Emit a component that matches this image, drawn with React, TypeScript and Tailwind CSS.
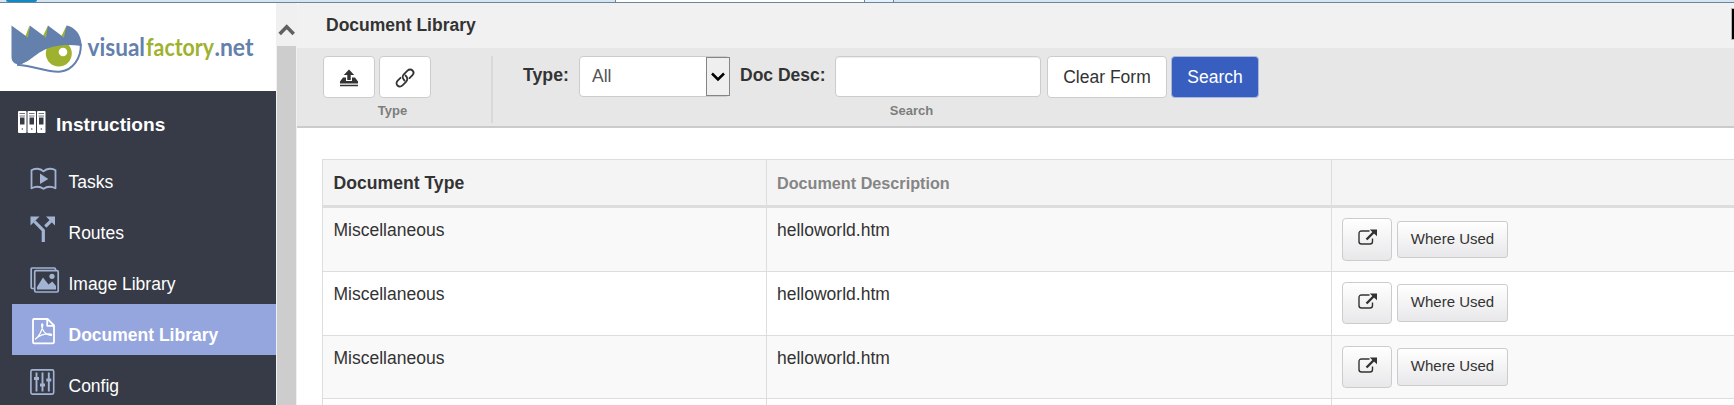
import React from "react";

const rows = [
  { type: "Miscellaneous", desc: "helloworld.htm", height: "h-[64px]", open: "mt-[10px] h-[43px]", used: "mt-[13px] h-[37px]" },
  { type: "Miscellaneous", desc: "helloworld.htm", height: "h-[64px]", open: "mt-[10px] h-[42px]", used: "mt-[12px] h-[38px]" },
  { type: "Miscellaneous", desc: "helloworld.htm", height: "h-[63px]", open: "mt-[10px] h-[42px]", used: "mt-[12px] h-[38px]" },
];

function BindersIcon() {
  return (
    <svg className="h-[23px] w-[28px] shrink-0" viewBox="0 0 28 23" fill="none">
      {[0, 9.5, 19].map((x) => (
        <g key={x}>
          <rect x={x} y="0" width="8.5" height="22" rx="1" fill="#fff" />
          <path d={`M${x + 1.5} 2.5h5.5M${x + 1.5} 5h5.5`} stroke="#707580" strokeWidth="1" />
          <rect x={x + 2} y="6.5" width="4.5" height="7" fill="#363b47" />
          <circle cx={x + 4.3} cy="18" r="0.7" fill="#363b47" />
        </g>
      ))}
    </svg>
  );
}

function TasksIcon() {
  return (
    <svg className="h-[28px] w-[30px]" viewBox="0 0 30 28" fill="none">
      <path d="M1.500 5.200C4.500 3.200 10 3 13.500 6.300C17 3 22.500 3.200 25.500 5.200V23.300C21.500 21.300 17 21.300 13.500 23.800C10 21.300 5.500 21.300 1.500 23.300Z" stroke="#a3b4d3" strokeWidth="1.8" strokeLinejoin="round" />
      <path d="M10 8.500L18.300 14L10 19Z" fill="#a3b4d3" />
    </svg>
  );
}

function RoutesIcon() {
  return (
    <svg className="h-[28px] w-[30px]" viewBox="0 0 30 28" fill="none">
      <path d="M13.300 26V14.500L4.500 5.500M15.300 10.500L21 4.800" stroke="#a3b4d3" strokeWidth="3.200" />
      <path d="M0.500 0.500H9.500L0.500 9.500ZM16 0.500H25V9.500Z" fill="#a3b4d3" />
    </svg>
  );
}

function ImagesIcon() {
  return (
    <svg className="h-[28px] w-[30px]" viewBox="0 0 30 28" fill="none" stroke="#a3b4d3" strokeWidth="1.700">
      <path d="M4 21.500H2.500Q1.200 21.500 1.200 20V2Q1.200 1 2.500 1H24.500Q25.500 1 25.500 3" />
      <rect x="4.700" y="3.700" width="23.500" height="21.300" rx="1.200" />
      <path d="M7 22.500V20L13 10.500L18.500 17.500L22.300 14.500L26 19V22.500Z" fill="#a3b4d3" stroke="none" />
      <circle cx="22" cy="9.300" r="2.600" fill="#a3b4d3" stroke="none" />
    </svg>
  );
}

function PdfIcon() {
  return (
    <svg className="h-[28px] w-[30px]" viewBox="0 0 30 28" fill="none" stroke="#fff" strokeWidth="1.800" strokeLinejoin="round">
      <path d="M4 1H17.500L24 7.500V24Q24 25.300 22.500 25.300H4.200Q3 25.300 3 24V2.200Q3 1 4 1Z" />
      <path d="M17.200 1V7.800H24" />
      <path d="M5.500 21C9 18.500 12.500 12 12.800 7C12.800 5.500 11.400 5.500 11.600 7.500C12 11.500 14.500 16 20.500 17.300C22.200 17.600 22 16 20 15.900C15 15.800 9.500 17 5.500 21Z" strokeWidth="1.300" />
    </svg>
  );
}

function ConfigIcon() {
  return (
    <svg className="h-[28px] w-[30px]" viewBox="0 0 30 28" fill="none" stroke="#a3b4d3">
      <rect x="0.900" y="0.900" width="22.800" height="24.200" rx="1.500" strokeWidth="1.600" />
      <path d="M6.500 3.500V22.500M12.500 3.500V22.500M18.800 3.500V22.500" strokeWidth="1.900" />
      <path d="M4 9.500H9M10 16H15M16.300 11H21.300" strokeWidth="3.200" />
    </svg>
  );
}

function OpenIcon() {
  return (
    <svg className="h-[17px] w-[20px]" viewBox="0 0 20 17" fill="none">
      <path d="M11.500 2H3.500Q1 2 1 4.500V12.500Q1 15 3.500 15H12Q14.500 15 14.500 12.500V9.500" stroke="#333" strokeWidth="1.400" />
      <path d="M8.500 10.500L16 3" stroke="#333" strokeWidth="2.400" />
      <path d="M11.700 0.500H19V7.300Z" fill="#333" />
    </svg>
  );
}

function Logo() {
  return (
    <svg className="h-[52px] w-[248px] font-[Lato,sans-serif] text-[25px] font-bold" viewBox="10 24 248 52" fill="none">
      <path d="M25.500 36L29.500 25.500V39ZM43 36L48 25.500V39ZM61.500 36L66.500 25.500V39Z" fill="#9eb22f" />
      <path d="M11.500 25.500L28 37.500L29.800 25.500L46 37.500L48 25.500L64 37.500L66.500 25.500C75 27 81.500 35 81.500 45C68 42 51 45 42 51C34 56 29 61 22 64C15.500 65.500 11.500 62 11.500 57Z" fill="#6480ad" />
      <path d="M23 63.500C34 61 42 48 57 45.300C66 43.600 75 44.200 81 46C81.500 58 73 70 62 71.500C50 73 37 66 23 65Z" fill="#fff" />
      <circle cx="58.800" cy="53.500" r="13" fill="#9eb22f" />
      <path d="M40 50C44 45 47 40 58 39C68 39 76 40 81.500 43.500V46C66 43.500 51 45.300 40 52Z" fill="#6480ad" />
      <circle cx="63" cy="52" r="4.300" fill="#fff" />
      <path d="M80.800 44C81.500 59 72 70 61 71.500C48 73 36 66 17 64.800" stroke="#6480ad" strokeWidth="2" />
      <text x="87.500" y="56" textLength="57.500" lengthAdjust="spacingAndGlyphs" fill="#6480ad">visual</text>
      <text x="146" y="56" textLength="68" lengthAdjust="spacingAndGlyphs" fill="#9eb22f">factory</text>
      <text x="214.500" y="56" textLength="39" lengthAdjust="spacingAndGlyphs" fill="#6480ad">.net</text>
    </svg>
  );
}

const navItems = [
  { label: "Tasks", icon: <TasksIcon />, active: false },
  { label: "Routes", icon: <RoutesIcon />, active: false },
  { label: "Image Library", icon: <ImagesIcon />, active: false },
  { label: "Document Library", icon: <PdfIcon />, active: true },
  { label: "Config", icon: <ConfigIcon />, active: false },
];

function BrowserStrip() {
  return (
    <div className="flex h-[3px] shrink-0 border-b border-[#6d849c] bg-[#d6e5f2]">
      <div className="ml-[6px] h-[2px] w-[31px] rounded-b-sm bg-[#118ac4]" />
      <div className="ml-[578px] w-[250px] border-x border-[#6d849c] bg-white" />
      <div className="w-[29px] border-r border-[#6d849c] bg-[#e4f0fb]" />
    </div>
  );
}

function Sidebar() {
  return (
    <aside className="w-[276px] shrink-0 bg-[#363b47] text-white">
      <div className="h-[88px] bg-white pl-[10px] pt-[21px]">
        <Logo />
      </div>
      <div className="flex h-[60px] pl-[18px] pt-[20px]">
        <BindersIcon />
        <span className="ml-[10px] mt-[3px] text-[19.100px] font-bold leading-[22px]">Instructions</span>
      </div>
      <nav className="pl-[12px]">
        {navItems.map((item) => (
          <div key={item.label} className={item.active ? "flex h-[51px] bg-[#95a6df] pl-[18px] pt-[14px] font-bold" : "flex h-[51px] pl-[18px] pt-[14px]"}>
            {item.icon}
            <span className="ml-[8.500px] mt-[7px] whitespace-nowrap leading-[20px]">{item.label}</span>
          </div>
        ))}
      </nav>
    </aside>
  );
}

function Scrollbar() {
  return (
    <div className="flex w-[21px] shrink-0 flex-col bg-[#f0f0f0] pl-px pr-px">
      <svg className="h-[43px] w-[19px]" viewBox="0 0 19 43" fill="none">
        <path d="M2.700 31L9.700 23.700L16.700 31" stroke="#606060" strokeWidth="3.500" />
      </svg>
      <div className="flex-1 bg-[#cdcdcd]" />
    </div>
  );
}

function Toolbar() {
  return (
    <div className="flex h-[80px] shrink-0 border-b-2 border-[#cbcbcb] bg-[#e7e7e7] pl-[26px] pt-[8px]">
      <div className="mb-[3px] flex w-[170px] flex-col border-r-2 border-[#d9d9d9]">
        <div className="flex gap-[4px]">
          <button className="flex h-[42px] w-[52px] items-center justify-center rounded-[4px] border border-[#ccc] bg-white">
            <svg className="mt-[2px] h-[18px] w-[20px]" viewBox="0 0 20 18" fill="#333">
              <path d="M10 0.500L15.200 6H11.700V11H8.300V6H4.800ZM4 8.500H7V12H13V8.500H16L19 12.500V14.400H1V12.500ZM1 15.700H19V17.200H1Z" />
            </svg>
          </button>
          <button className="flex h-[42px] w-[52px] items-center justify-center rounded-[4px] border border-[#ccc] bg-white">
            <svg className="mt-[2px] h-[20px] w-[20px]" viewBox="0 0 20 20" fill="none" stroke="#333" strokeWidth="1.800" strokeLinecap="round">
              <path d="M9.500 12.500C7 10 7.200 8 9 6.200L12.500 2.700C14.200 1 16.200 1.200 17.500 2.500C18.800 3.800 18.900 5.800 17.300 7.400L14.500 10.200" />
              <path d="M10.500 7.500C13 10 12.800 12 11 13.800L7.500 17.300C5.800 19 3.800 18.800 2.500 17.500C1.200 16.200 1.100 14.200 2.700 12.600L5.500 9.800" />
            </svg>
          </button>
        </div>
        <span className="mr-[29px] mt-[5px] text-center text-[13px] font-bold leading-[16px] text-[#7d7d7d]">Type</span>
      </div>
      <div className="ml-[30px] flex w-[777px] flex-col">
        <div className="flex h-[42px] items-start whitespace-nowrap">
          <label className="mt-[9px] w-[56px] text-[17.700px] font-bold leading-[20px]">Type:</label>
          <div className="flex h-[41px] w-[151px] justify-between rounded-[4px] border border-[#ccc] bg-white">
            <span className="ml-[12px] mt-[9px] leading-[20px] text-[#555]">All</span>
            <div className="-mr-px flex w-[24px] items-center justify-center border border-[#858585] bg-[#efefef]">
              <svg className="h-[10px] w-[16px] shrink-0" viewBox="0 0 16 10" fill="none">
                <path d="M2 1.500L8 7.500L14 1.500" stroke="#000" strokeWidth="2.500" />
              </svg>
            </div>
          </div>
          <label className="ml-[10px] mt-[9px] w-[95px] font-bold leading-[20px]">Doc Desc:</label>
          <input className="h-[41px] w-[206px] rounded-[4px] border border-[#ccc] bg-white shadow-[inset_0_1px_1px_rgba(0,0,0,0.075)]" />
          <button className="ml-[6px] h-[42px] w-[120px] rounded-[4px] border border-[#ccc] bg-white">Clear Form</button>
          <button className="ml-[4px] h-[42px] w-[88px] rounded-[4px] border border-[#a9b8de] bg-[#385fc0] text-white">Search</button>
        </div>
        <span className="mt-[5px] text-center text-[13px] font-bold leading-[16px] text-[#7d7d7d]">Search</span>
      </div>
    </div>
  );
}

function DocumentTable() {
  return (
    <div className="ml-[25px] mt-[31px] border-l border-t border-[#ddd]">
      <div className="flex h-[48px] border-b-[3px] border-[#ddd] bg-[#f4f4f4] font-bold">
        <div className="w-[444px] border-r border-[#ddd] pl-[10.500px] pt-[13px] text-[17.600px] leading-[20px]">Document Type</div>
        <div className="w-[565px] border-r border-[#ddd] pl-[10px] pt-[13px] text-[16.200px] leading-[20px] text-[#858585]">Document Description</div>
      </div>
      {rows.map((row, i) => (
        <div key={i} className={`flex border-b border-[#ddd] odd:bg-white even:bg-[#f9f9f9] ${row.height}`}>
          <div className="w-[444px] border-r border-[#ddd] pl-[10.500px] pt-[12px] leading-[20px]">{row.type}</div>
          <div className="w-[565px] border-r border-[#ddd] pl-[10px] pt-[12px] leading-[20px]">{row.desc}</div>
          <div className="flex items-start pl-[10px]">
            <button className={`flex w-[50px] items-center justify-center rounded-[4px] border border-[#ccc] bg-linear-to-b from-white to-[#e8e8ea] pb-[4px] pl-[2px] ${row.open}`}>
              <OpenIcon />
            </button>
            <button className={`ml-[5px] w-[111px] rounded-[3px] border border-[#ccc] bg-linear-to-b from-white to-[#e8e8ea] pb-[2px] text-[15px] leading-[18px] ${row.used}`}>Where Used</button>
          </div>
        </div>
      ))}
      <div className="flex h-[8px]">
        <div className="w-[444px] border-r border-[#ddd]" />
        <div className="w-[565px] border-r border-[#ddd]" />
      </div>
    </div>
  );
}

export default function App() {
  return (
    <div className="flex h-[405px] w-[1734px] flex-col overflow-hidden bg-white font-['Liberation_Sans',Arial,sans-serif] text-[17.500px] text-[#333]">
      <BrowserStrip />
      <div className="flex min-h-0 flex-1">
        <Sidebar />
        <Scrollbar />
        <main className="flex min-w-0 flex-1 flex-col">
          <header className="flex h-[45px] shrink-0 justify-between rounded-tl-[3px] bg-[#f1f1f1] pl-[29px]">
            <h1 className="mt-[12px] font-bold leading-[20px]">Document Library</h1>
            <div className="mt-[5px] h-[32px] w-[3px] border-y border-l border-[#b5b5b5] bg-black" />
          </header>
          <Toolbar />
          <DocumentTable />
        </main>
      </div>
    </div>
  );
}
